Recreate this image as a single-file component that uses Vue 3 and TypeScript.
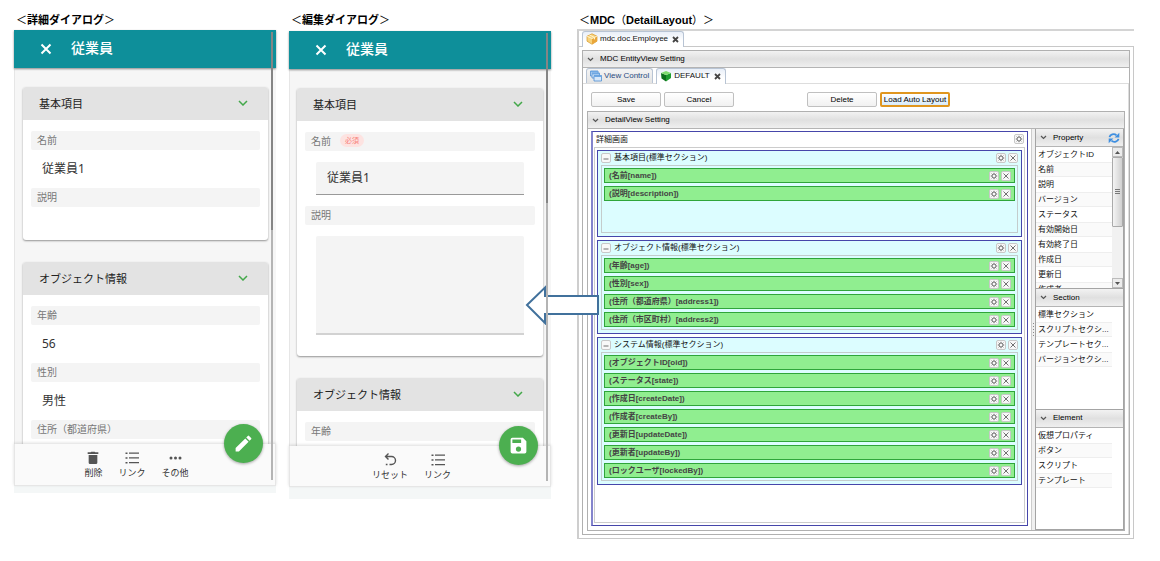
<script setup lang="ts">
interface Section {
  title: string
  items: string[]
  roomy?: boolean
}

interface Palette {
  title: string
  items: string[]
  kind: string
}

const objectFields = [
  { label: '年齢', value: '56' },
  { label: '性別', value: '男性' },
  { label: '住所（都道府県）', value: '' },
]

const sections: Section[] = [
  { title: '基本項目(標準セクション)', items: ['(名前[name])', '(説明[description])'], roomy: true },
  {
    title: 'オブジェクト情報(標準セクション)',
    items: ['(年齢[age])', '(性別[sex])', '(住所（都道府県）[address1])', '(住所（市区町村）[address2])'],
  },
  {
    title: 'システム情報(標準セクション)',
    items: [
      '(オブジェクトID[oid])',
      '(ステータス[state])',
      '(作成日[createDate])',
      '(作成者[createBy])',
      '(更新日[updateDate])',
      '(更新者[updateBy])',
      '(ロックユーザ[lockedBy])',
    ],
  },
]

const palettes: Palette[] = [
  {
    title: 'Property',
    kind: 'property',
    items: ['オブジェクトID', '名前', '説明', 'バージョン', 'ステータス', '有効開始日', '有効終了日', '作成日', '更新日', '作成者'],
  },
  {
    title: 'Section',
    kind: 'section',
    items: ['標準セクション', 'スクリプトセクシ...', 'テンプレートセク...', 'バージョンセクシ...'],
  },
  { title: 'Element', kind: 'element', items: ['仮想プロパティ', 'ボタン', 'スクリプト', 'テンプレート'] },
]
</script>

<template>
  <main class="page">
    <section class="column">
      <h2 class="caption"><span>＜</span>詳細ダイアログ<span>＞</span></h2>
      <div class="phone phone-detail">
        <header class="appbar">
          <button class="appbar-close" aria-label="閉じる">
            <svg width="12" height="12" viewBox="0 0 12 12"><path d="M1.5 1.5l9 9M10.5 1.5l-9 9" /></svg>
          </button>
          <h1>従業員</h1>
        </header>
        <div class="scroll">
          <article class="card">
            <button class="card-head">
              基本項目
              <svg width="10" height="6" viewBox="0 0 10 6"><path d="M1 1l4 4 4-4" /></svg>
            </button>
            <dl class="fields">
              <dt>名前</dt>
              <dd>従業員1</dd>
              <dt>説明</dt>
              <dd class="blank"></dd>
            </dl>
          </article>
          <article class="card">
            <button class="card-head">
              オブジェクト情報
              <svg width="10" height="6" viewBox="0 0 10 6"><path d="M1 1l4 4 4-4" /></svg>
            </button>
            <dl class="fields">
              <template v-for="f in objectFields" :key="f.label">
                <dt>{{ f.label }}</dt>
                <dd>{{ f.value }}</dd>
              </template>
            </dl>
          </article>
        </div>
        <footer class="actions">
          <button class="action">
            <svg width="16" height="16" viewBox="0 0 24 24"><path d="M5.5 7.5h13V19a2 2 0 0 1-2 2h-9a2 2 0 0 1-2-2zM4 3.5h4.5l1-1h5l1 1H20v2.5H4z" /></svg>
            削除
          </button>
          <button class="action">
            <svg width="16" height="16" viewBox="0 0 16 16"><path d="M1.500 2.500h2v1.500h-2zM5 2.500h10v1.300H5zM1.500 7.300h2v1.500h-2zM5 7.300h10v1.300H5zM1.500 12h2v1.500h-2zM5 12h10v1.300H5z" /></svg>
            リンク
          </button>
          <button class="action">
            <svg width="16" height="16" viewBox="0 0 16 16"><circle cx="4" cy="8" r="1.500" /><circle cx="8.500" cy="8" r="1.500" /><circle cx="13" cy="8" r="1.500" /></svg>
            その他
          </button>
          <button class="fab" aria-label="編集">
            <svg width="21" height="21" viewBox="0 0 24 24"><path d="M3 17.250V21h3.750L17.810 9.940l-3.750-3.750zM20.710 7.040a1 1 0 0 0 0-1.410l-2.340-2.340a1 1 0 0 0-1.410 0l-1.830 1.830 3.750 3.750z" /></svg>
          </button>
        </footer>
        <div class="thumb"></div>
      </div>
    </section>

    <section class="column">
      <h2 class="caption"><span>＜</span>編集ダイアログ<span>＞</span></h2>
      <div class="phone phone-edit">
        <header class="appbar">
          <button class="appbar-close" aria-label="閉じる">
            <svg width="12" height="12" viewBox="0 0 12 12"><path d="M1.5 1.5l9 9M10.5 1.5l-9 9" /></svg>
          </button>
          <h1>従業員</h1>
        </header>
        <div class="scroll">
          <article class="card">
            <button class="card-head">
              基本項目
              <svg width="10" height="6" viewBox="0 0 10 6"><path d="M1 1l4 4 4-4" /></svg>
            </button>
            <form class="fields form">
              <label for="emp-name">名前 <span class="required">必須</span></label>
              <input id="emp-name" type="text" value="従業員1" />
              <label for="emp-desc">説明</label>
              <textarea id="emp-desc"></textarea>
            </form>
          </article>
          <article class="card">
            <button class="card-head">
              オブジェクト情報
              <svg width="10" height="6" viewBox="0 0 10 6"><path d="M1 1l4 4 4-4" /></svg>
            </button>
            <form class="fields form">
              <label for="emp-age">年齢</label>
              <input id="emp-age" type="text" />
            </form>
          </article>
        </div>
        <footer class="actions">
          <button class="action">
            <svg class="line" width="16" height="16" viewBox="0 0 16 16"><path d="M6.500 1.500L3.500 4.500 6.500 7.500M4 4.500H9.500a4 4 0 0 1 0 8H7.500M3.800 12.500h1.700" /></svg>
            リセット
          </button>
          <button class="action">
            <svg width="16" height="16" viewBox="0 0 16 16"><path d="M1.500 2.500h2v1.500h-2zM5 2.500h10v1.300H5zM1.500 7.300h2v1.500h-2zM5 7.300h10v1.300H5zM1.500 12h2v1.500h-2zM5 12h10v1.300H5z" /></svg>
            リンク
          </button>
          <button class="fab" aria-label="保存">
            <svg width="21" height="21" viewBox="0 0 24 24"><path d="M17 3H5a2 2 0 0 0-2 2v14a2 2 0 0 0 2 2h14a2 2 0 0 0 2-2V7zm-5 16a3 3 0 1 1 0-6 3 3 0 0 1 0 6zm3-10H5V5h10z" /></svg>
          </button>
        </footer>
        <div class="thumb"></div>
      </div>
    </section>

    <section class="column mdc">
      <h2 class="caption"><span>＜</span>MDC<span>（</span>DetailLayout<span>）＞</span></h2>
      <div class="workspace">
        <nav class="tabs">
          <button class="tab active">
            <svg width="12" height="12" viewBox="0 0 12 12">
              <path fill="#f7d27a" stroke="#d99a2b" stroke-width=".7" d="M6 .8l5 2.400v5L6 11.300 1 8.200v-5z" />
              <path fill="#e9a63a" d="M6 5.500l5-2.300v5L6 11.300z" />
              <path fill="none" stroke="#fff3cf" d="M1.200 3.300L6 5.500l4.800-2.200M3.500 2l5 2.400v2" />
            </svg>
            mdc.doc.Employee
            <svg class="tab-x" width="7" height="7" viewBox="0 0 7 7"><path d="M1 1l5 5M6 1L1 6" /></svg>
          </button>
        </nav>
        <div class="frame">
          <div class="panel">
            <h3 class="bar">
              <svg width="7" height="5" viewBox="0 0 7 5"><path d="M1 1l2.500 2.500L6 1" /></svg>MDC EntityView Setting
            </h3>
            <nav class="tabs inner">
              <button class="tab">
                <svg width="12" height="12" viewBox="0 0 12 12">
                  <g fill="#d7e8fa" stroke="#4f8ed0" stroke-width=".8">
                    <path d="M.5 1h7.500v5H.5z" /><path d="M2 3h7.500v5H2z" /><path d="M4 5.500h7.500v5.500H4z" />
                  </g>
                  <path fill="#6fa8e3" d="M.5 1h7.500v1.500H.5zM2 3h7.500v1.500H2zM4 5.500h7.500V7H4z" />
                </svg>
                View Control
              </button>
              <button class="tab active">
                <svg width="12" height="12" viewBox="0 0 12 12">
                  <path fill="#1f9d2f" d="M6 5l5-2v5L6 11.500z" />
                  <path fill="#0c6f1c" d="M1 3l5 2v6.500L1.500 8.500z" />
                  <path fill="#7fdc6f" d="M1 3l5-2 5 2-5 2z" />
                </svg>
                DEFAULT
                <svg class="tab-x" width="7" height="7" viewBox="0 0 7 7"><path d="M1 1l5 5M6 1L1 6" /></svg>
              </button>
            </nav>
            <div class="view">
              <div class="toolbar">
                <button>Save</button>
                <button>Cancel</button>
                <button class="apart">Delete</button>
                <button class="focus">Load Auto Layout</button>
              </div>
              <div class="panel detail">
                <h3 class="bar">
                  <svg width="7" height="5" viewBox="0 0 7 5"><path d="M1 1l2.500 2.500L6 1" /></svg>DetailView Setting
                </h3>
                <div class="designer">
                  <div class="canvas">
                    <div class="row-head">
                      <span>詳細画面</span>
                      <button class="mini" aria-label="設定"><svg width="8" height="8" viewBox="0 0 8 8"><circle class="gear" cx="4" cy="4" r="2" /><path class="teeth" d="M4 .8v1M4 6.200v1M.8 4h1M6.200 4h1M1.700 1.700l.8.8M5.500 5.500l.8.8M6.300 1.700l-.8.8M2.500 5.500l-.8.8" /></svg></button>
                    </div>
                    <div class="stack">
                      <section v-for="s in sections" :key="s.title" class="block" :class="{ roomy: s.roomy }">
                        <div class="block-head">
                          <button class="mini" aria-label="折りたたむ"><svg width="8" height="8" viewBox="0 0 8 8"><path d="M1.500 5h5" /></svg></button>
                          <span>{{ s.title }}</span>
                          <button class="mini" aria-label="設定"><svg width="8" height="8" viewBox="0 0 8 8"><circle class="gear" cx="4" cy="4" r="2" /><path class="teeth" d="M4 .8v1M4 6.200v1M.8 4h1M6.200 4h1M1.700 1.700l.8.8M5.500 5.500l.8.8M6.300 1.700l-.8.8M2.500 5.500l-.8.8" /></svg></button>
                          <button class="mini" aria-label="削除"><svg width="8" height="8" viewBox="0 0 8 8"><path d="M1.500 1.500l5 5M6.500 1.500l-5 5" /></svg></button>
                        </div>
                        <ul class="slots">
                          <li v-for="i in s.items" :key="i">
                            <span>{{ i }}</span>
                            <button class="mini" aria-label="設定"><svg width="8" height="8" viewBox="0 0 8 8"><circle class="gear" cx="4" cy="4" r="2" /><path class="teeth" d="M4 .8v1M4 6.200v1M.8 4h1M6.200 4h1M1.700 1.700l.8.8M5.500 5.500l.8.8M6.300 1.700l-.8.8M2.500 5.500l-.8.8" /></svg></button>
                            <button class="mini" aria-label="削除"><svg width="8" height="8" viewBox="0 0 8 8"><path d="M1.500 1.500l5 5M6.500 1.500l-5 5" /></svg></button>
                          </li>
                        </ul>
                      </section>
                    </div>
                  </div>
                  <div class="splitter"><i></i></div>
                  <aside class="palettes">
                    <section v-for="p in palettes" :key="p.title" class="palette" :class="p.kind">
                      <h4 class="bar">
                        <svg width="7" height="5" viewBox="0 0 7 5"><path d="M1 1l2.500 2.500L6 1" /></svg>{{ p.title }}
                        <button v-if="p.kind === 'property'" class="refresh" aria-label="更新">
                          <svg width="12" height="12" viewBox="0 0 12 12">
                            <path fill="none" stroke="#3f8fe0" stroke-width="1.800" d="M1.500 5.200C2 2.500 6 1 8.500 3.300M10.500 6.800C10 9.500 6 11 3.500 8.700" />
                            <path fill="#3f8fe0" d="M11.300.8v4.700H6.600zM.7 11.200V6.500h4.700z" />
                          </svg>
                        </button>
                      </h4>
                      <div class="palette-body">
                        <ul>
                          <li v-for="i in p.items" :key="i">{{ i }}</li>
                        </ul>
                        <div v-if="p.kind === 'property'" class="scrollbar">
                          <span class="arrow"><svg width="5" height="3" viewBox="0 0 5 3"><path d="M0 3l2.500-3L5 3z" /></svg></span>
                          <span class="grip"><i></i></span>
                          <span class="arrow"><svg width="5" height="3" viewBox="0 0 5 3"><path d="M0 0l2.500 3L5 0z" /></svg></span>
                        </div>
                      </div>
                    </section>
                  </aside>
                </div>
              </div>
            </div>
          </div>
        </div>
      </div>
      <svg class="pointer" width="75" height="40" viewBox="0 0 75 40">
        <path d="M2 20L20 2.500V11h53v18H20v9z" />
      </svg>
    </section>
  </main>
</template>

<style>
body {
  background: #fff;
}
</style>

<style scoped>
* {
  box-sizing: border-box;
  margin: 0;
  padding: 0;
}
button,
input,
textarea {
  font: inherit;
  color: inherit;
  border: 0;
  background: none;
}
svg {
  display: block;
  flex: none;
}
ul {
  list-style: none;
}
.page {
  display: grid;
  grid-template-columns: 262fr 262fr 570fr;
  column-gap: 13px;
  padding: 12px 26px 0 14px;
  align-items: start;
}
.column {
  min-width: 0;
  position: relative;
}
.caption {
  height: 17px;
  padding-left: 2px;
  font: bold 11px/16px "Liberation Sans", "Noto Sans CJK JP", sans-serif;
  color: #000;
  white-space: nowrap;
}
.caption span {
  font-weight: 400;
}

/* Mobile dialogs */
.phone {
  position: relative;
  margin-top: 1px;
  padding-bottom: 7px;
  background: #f4f7f7;
  font-family: "Noto Sans", "Noto Sans CJK JP", sans-serif;
  color: #333;
}
.phone-edit {
  margin-top: 2px;
  padding-bottom: 12px;
}
.appbar {
  position: relative;
  z-index: 1;
  display: flex;
  align-items: center;
  gap: 19px;
  height: 38px;
  padding: 0 0 0 26px;
  background: #0e8f9a;
  color: #fff;
  box-shadow: 0 1px 2px rgba(0, 0, 0, 0.45);
}
.appbar h1 {
  font-size: 14px;
  line-height: 20px;
  font-weight: 500;
  padding-bottom: 2px;
}
.appbar-close path {
  fill: none;
  stroke: #fff;
  stroke-width: 2;
}
.scroll {
  height: calc(100vh - 185px);
  overflow: hidden;
  padding: 19px 8px 0 8px;
  background: #f6f6f6;
  border-left: 1px solid #e6e6e6;
}
.phone-edit .scroll {
  height: calc(100vh - 184px);
  padding-left: 7px;
}
.card {
  margin-bottom: 22px;
  background: #fff;
  border-radius: 3px;
  box-shadow: 0 1px 2px rgba(0, 0, 0, 0.4);
  overflow: hidden;
}
.card-head {
  display: flex;
  align-items: center;
  justify-content: space-between;
  width: 100%;
  height: 33px;
  padding: 0 20px 2px 16px;
  background: #e3e3e3;
  font-size: 11px;
  color: #222;
}
.card-head path {
  fill: none;
  stroke: #43a84a;
  stroke-width: 1.5;
}
.fields {
  padding: 11px 8px 0;
}
.fields dt,
.fields label {
  display: flex;
  align-items: center;
  height: 19px;
  padding: 0 6px 2px;
  border-radius: 2px;
  background: #f4f4f4;
  font-size: 10px;
  line-height: 16px;
  color: #777;
}
.fields dd {
  height: 38px;
  padding-left: 11px;
  font-size: 12px;
  line-height: 37px;
}
.fields dd.blank {
  height: 33px;
}
.required {
  margin-left: 9px;
  padding: 0 5px;
  border-radius: 7px;
  background: #fde3e1;
  color: #f8827a;
  font-size: 7px;
  line-height: 13px;
}
.form {
  padding-bottom: 21px;
}
.form input,
.form textarea {
  display: block;
  width: calc(100% - 22px);
  height: 33px;
  margin: 11px;
  padding: 0 11px 2px;
  border-bottom: 1px solid #999;
  border-radius: 2px 2px 0 0;
  background: #f4f4f4;
  font-size: 12px;
}
.form textarea {
  height: 99px;
  margin-bottom: 0;
  border-bottom: 2px solid #d2d2d2;
  resize: none;
}
.actions {
  position: relative;
  display: flex;
  justify-content: center;
  gap: 16px;
  height: 42px;
  padding: 6px 17px 0 0;
  background: #fafafa;
  border: solid #e6e6e6;
  border-width: 0 1px 1px;
  box-shadow: 0 -1px 3px rgba(0, 0, 0, 0.14);
}
.phone-edit .actions {
  height: 41px;
}
.action {
  display: flex;
  flex-direction: column;
  align-items: center;
  height: 30px;
  font-size: 9px;
  line-height: 13px;
  color: #333;
}
.action svg {
  fill: #555;
}
.action svg.line {
  fill: none;
  stroke: #555;
  stroke-width: 1.4;
}
.fab {
  position: absolute;
  top: -20px;
  right: 12px;
  display: grid;
  place-items: center;
  width: 39px;
  height: 39px;
  border-radius: 50%;
  background: #4caf50;
  box-shadow: 0 1px 3px rgba(0, 0, 0, 0.35);
}
.fab svg {
  fill: #fff;
}
.thumb {
  position: absolute;
  z-index: 2;
  top: 2px;
  right: 3px;
  bottom: 13px;
  width: 2px;
  background: linear-gradient(#858585 0 198px, #b4b4b4 198px);
}
.phone-edit .thumb {
  bottom: 18px;
  background: linear-gradient(#858585 0 170px, #b4b4b4 170px);
}

/* Layout designer */
.mdc {
  margin-left: 13px;
  font-family: "Liberation Sans", "Noto Sans CJK JP", sans-serif;
  font-size: 8px;
  line-height: 12px;
  color: #111;
}
.workspace {
  border-top: 2px solid #d4d4d4;
  border-left: 2px solid #cecece;
}
.tabs {
  display: flex;
  gap: 3px;
  height: 15px;
  padding-left: 3px;
}
.tab {
  position: relative;
  display: flex;
  align-items: center;
  gap: 2px;
  height: 16px;
  padding: 0 3px 1px;
  border: 1px solid #b8c4d4;
  border-bottom: 0;
  border-radius: 3px 3px 0 0;
  background: linear-gradient(#f4f4f4, #e4e4e4);
  color: #2a4a80;
  white-space: nowrap;
}
.tab.active {
  background: linear-gradient(#e9eff8, #fff 60%);
  color: #111;
}
.tab-x {
  margin: 0 1px 0 2px;
}
.tab-x path {
  fill: none;
  stroke: #444;
  stroke-width: 1.8;
}
.frame {
  padding: 3px;
  border: solid #c8c8c8;
  border-width: 1px 1px 1px 0;
}
.panel {
  border: 1px solid #b0b0b0;
  background: #fff;
}
.bar {
  display: flex;
  align-items: center;
  gap: 6px;
  height: 17px;
  padding-left: 4px;
  border-bottom: 1px solid #b4b4b4;
  background: linear-gradient(#f2f2f2, #e0e0e0 50%, #efefef);
  font-size: 8px;
  font-weight: 400;
  color: #000;
}
.bar > svg path {
  fill: none;
  stroke: #555;
  stroke-width: 1.2;
}
.tabs.inner .tab:not(.active) {
  height: 15px;
}
.view {
  padding: 8px 3px 3px 4px;
  border-top: 1px solid #ddd;
  border-right: 1px solid #ddd;
}
.toolbar {
  display: flex;
  gap: 3px;
  padding: 0 4px 4px;
}
.toolbar button {
  width: 70px;
  height: 15px;
  border: 1px solid #c0c0c0;
  border-radius: 2px;
  background: linear-gradient(#fff, #f1f1f1);
  line-height: 13px;
  color: #000;
  white-space: nowrap;
}
.toolbar .apart {
  margin-left: 70px;
}
.toolbar .focus {
  border: 2px solid #e0961f;
  background: linear-gradient(#fff, #d8ebfa);
  line-height: 11px;
}
.designer {
  display: grid;
  grid-template-columns: minmax(0, 1fr) 4px 89px;
}
.canvas {
  margin: 2px 3px 4px;
  border: 1px solid #4646aa;
  border-left: 2px solid #8484cc;
  padding: 2px 2px 2px 1px;
}
.row-head {
  display: flex;
  justify-content: space-between;
  align-items: flex-start;
  height: 13px;
  padding: 0 1px 0 2px;
}
.stack {
  display: flex;
  flex-direction: column;
  gap: 3px;
  padding: 2px 2px 37px;
  border: 1px solid #ccc;
}
.block {
  display: flex;
  flex-direction: column;
  padding: 0 3px 3px;
  border: 1px solid #4646aa;
  background: #dcfdff;
}
.block.roomy {
  min-height: 87px;
}
.block-head {
  display: flex;
  align-items: center;
  gap: 2px;
  height: 14px;
}
.block-head span,
.slots span {
  flex: 1;
  white-space: nowrap;
}
.block-head span {
  padding-left: 1px;
}
.slots {
  flex: 1;
  display: flex;
  flex-direction: column;
  gap: 3px;
  padding: 2px;
  border: 1px solid #c4cccc;
}
.slots li {
  display: flex;
  align-items: center;
  gap: 2px;
  height: 15px;
  padding: 0 3px 0 4px;
  border: 1px solid #2fa53a;
  background: #90ee90;
  font-weight: bold;
  color: #444;
}
.mini {
  display: grid;
  place-items: center;
  width: 10px;
  height: 10px;
  border: 1px solid #c8c8c8;
  border-radius: 2px;
  background: #f8f8f8;
}
.mini path,
.mini circle {
  fill: none;
  stroke: #707070;
  stroke-width: 1;
}
.splitter {
  display: grid;
  align-items: center;
  border-left: 1px solid #ccc;
  background: #f0f0f0;
}
.splitter i {
  width: 1px;
  height: 13px;
  margin-left: 1px;
  background: repeating-linear-gradient(#888 0 1px, #eee 1px 3px);
}
.palettes {
  display: flex;
  flex-direction: column;
  border: solid #a4a4a4;
  border-width: 0 1px 1px;
}
.palette {
  flex: 1;
  display: flex;
  flex-direction: column;
}
.palette.property {
  flex: none;
  height: 159px;
}
.palette .bar {
  height: 18px;
}
.palette + .palette .bar {
  height: 19px;
  border-top: 1px solid #a4a4a4;
}
.refresh {
  margin: 0 3px 0 auto;
}
.palette-body {
  flex: 1;
  display: grid;
  grid-template-columns: minmax(0, 1fr) 11px;
  min-height: 0;
  overflow: hidden;
}
.palette li {
  height: 15px;
  padding-left: 2px;
  line-height: 15px;
  white-space: nowrap;
}
.palette li:nth-child(even) {
  border: solid #eee;
  border-width: 1px 0;
  background: #fafafa;
  line-height: 13px;
}
.scrollbar {
  display: flex;
  flex-direction: column;
  height: 141px;
  background: #f1f1f1;
}
.arrow {
  display: grid;
  place-items: center;
  height: 10px;
  border: 1px solid #bbb;
  background: #ececec;
}
.arrow path {
  fill: #555;
}
.grip {
  display: grid;
  place-items: center;
  height: 70px;
  margin-bottom: auto;
  border: 1px solid #aaa;
  border-radius: 1px;
  background: linear-gradient(90deg, #f4f4f4, #d0d0d0);
}
.grip i {
  width: 5px;
  height: 6px;
  background: repeating-linear-gradient(#777 0 1px, transparent 1px 2px);
}
.pointer {
  position: absolute;
  top: 273px;
  left: -52px;
}
.pointer path {
  fill: #fff;
  stroke: #41719c;
  stroke-width: 2;
}
</style>
